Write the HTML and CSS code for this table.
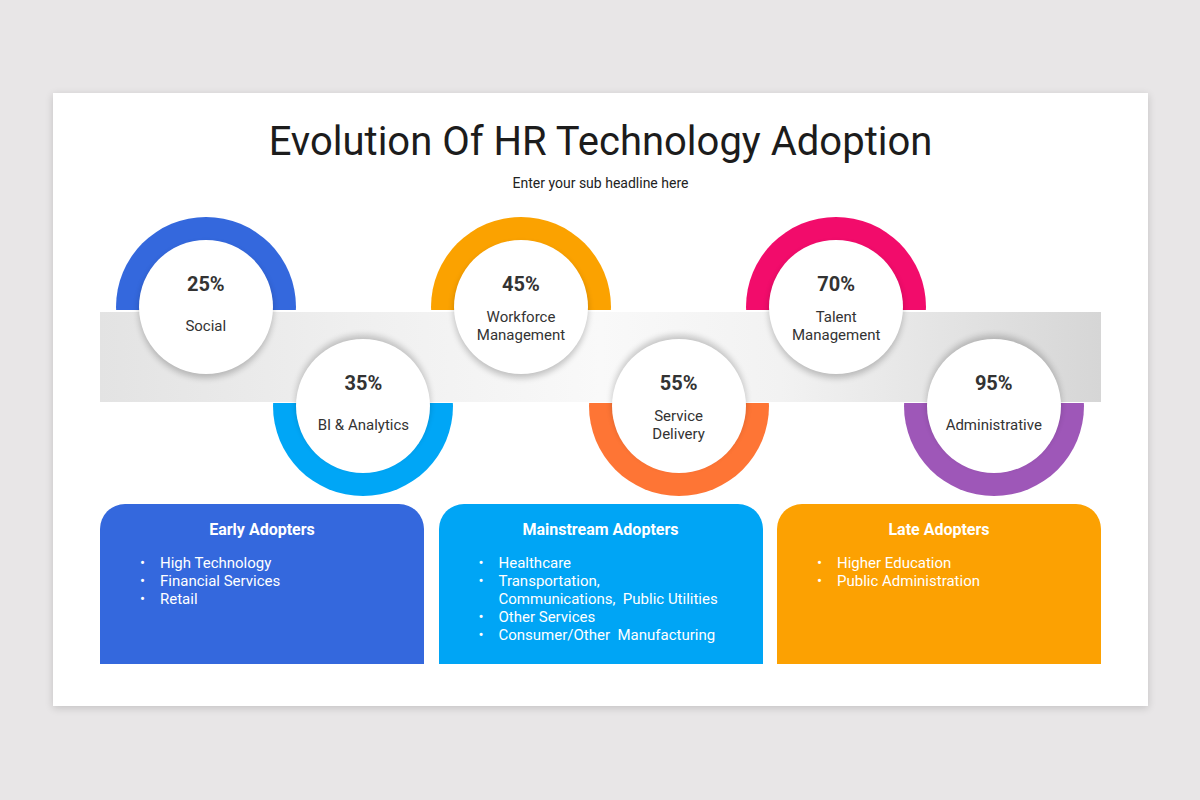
FILE: index.html
```html
<!DOCTYPE html>
<html lang="en">
<head>
<meta charset="utf-8">
<title>Evolution Of HR Technology Adoption</title>
<link rel="stylesheet" href="styles.css">
</head>
<body>
<main class="slide">
  <h1 class="title">Evolution Of HR Technology Adoption</h1>
  <p class="subtitle">Enter your sub headline here</p>

  <section class="diagram">
    <div class="band"></div>
    <div class="nodes">
      <div class="node node-top">
        <div class="ring ring-blue">
          <div class="disc disc-top">
            <span class="pct">25%</span>
            <span class="label">Social</span>
          </div>
        </div>
      </div>
      <div class="node node-bottom">
        <div class="ring ring-sky">
          <div class="disc disc-bottom">
            <span class="pct">35%</span>
            <span class="label">BI &amp; Analytics</span>
          </div>
        </div>
      </div>
      <div class="node node-top">
        <div class="ring ring-amber">
          <div class="disc disc-top">
            <span class="pct">45%</span>
            <span class="label">Workforce<br>Management</span>
          </div>
        </div>
      </div>
      <div class="node node-bottom">
        <div class="ring ring-orange">
          <div class="disc disc-bottom">
            <span class="pct">55%</span>
            <span class="label">Service<br>Delivery</span>
          </div>
        </div>
      </div>
      <div class="node node-top">
        <div class="ring ring-pink">
          <div class="disc disc-top">
            <span class="pct">70%</span>
            <span class="label">Talent<br>Management</span>
          </div>
        </div>
      </div>
      <div class="node node-bottom">
        <div class="ring ring-purple">
          <div class="disc disc-bottom">
            <span class="pct">95%</span>
            <span class="label">Administrative</span>
          </div>
        </div>
      </div>
    </div>
  </section>

  <section class="cards">
    <article class="card card-blue">
      <h2 class="card-title">Early Adopters</h2>
      <ul class="card-list">
        <li>High Technology</li>
        <li>Financial Services</li>
        <li>Retail</li>
      </ul>
    </article>
    <article class="card card-sky">
      <h2 class="card-title">Mainstream Adopters</h2>
      <ul class="card-list">
        <li>Healthcare</li>
        <li>Transportation,<br>Communications,&nbsp; Public Utilities</li>
        <li>Other Services</li>
        <li>Consumer/Other&nbsp; Manufacturing</li>
      </ul>
    </article>
    <article class="card card-amber">
      <h2 class="card-title">Late Adopters</h2>
      <ul class="card-list">
        <li>Higher Education</li>
        <li>Public Administration</li>
      </ul>
    </article>
  </section>
</main>
</body>
</html>
```

FILE: styles.css
```css
* { box-sizing: border-box; }

html, body {
  margin: 0;
  padding: 0;
}

body {
  background: #e8e6e7;
  font-family: Roboto, "Liberation Sans", Arial, sans-serif;
  width: 1200px;
  height: 800px;
  overflow: hidden;
}

.slide {
  margin: 93px 0 0 53px;
  width: 1095px;
  height: 613px;
  background: #ffffff;
  box-shadow: 0 2px 8px rgba(0, 0, 0, 0.16);
  padding: 21px 47px 0 47px;
  display: flex;
  flex-direction: column;
  align-items: stretch;
}

.title {
  margin: 0;
  text-align: center;
  font-size: 40px;
  line-height: 56px;
  font-weight: 400;
  color: #1c1c1c;
}

.subtitle {
  margin: 2px 0 0 0;
  text-align: center;
  font-size: 14px;
  line-height: 22px;
  color: #222222;
}

/* ---------- diagram ---------- */
.diagram {
  position: relative;
  margin-top: 23px;
  width: 1001px;
  height: 279px;
}

.band {
  position: absolute;
  left: 0;
  top: 95px;
  width: 1001px;
  height: 90px;
  z-index: 1;
  background: linear-gradient(to right, #e3e3e3 0%, #efefef 25%, #f9f9f9 50%, #f2f2f2 68%, #d6d6d6 100%);
  box-shadow: 0 -2px 0 #ffffff, 0 1px 0 #ffffff;
}

.nodes {
  display: flex;
  height: 279px;
  padding-left: 27px;
}

.node {
  width: 157.6px;
  flex: none;
  display: flex;
  justify-content: center;
}

.node-top { align-self: flex-start; }
.node-bottom { align-self: flex-end; }

.ring {
  width: 180px;
  height: 180px;
  flex: none;
  border-radius: 50%;
  display: flex;
  align-items: center;
  justify-content: center;
}

.ring-blue   { background: #3468dd; }
.ring-sky    { background: #00a6f6; }
.ring-amber  { background: #fba200; }
.ring-orange { background: #fe7535; }
.ring-pink   { background: #f20c6b; }
.ring-purple { background: #9e57b8; }

.disc {
  position: relative;
  z-index: 2;
  width: 134px;
  height: 134px;
  border-radius: 50%;
  background: #ffffff;
  display: flex;
  flex-direction: column;
  align-items: center;
  padding-top: 32px;
  color: #333333;
}

.disc-top { box-shadow: 0 4px 6px rgba(0, 0, 0, 0.22); }
.disc-bottom { box-shadow: 0 -4px 6px rgba(0, 0, 0, 0.2); }

.pct {
  display: block;
  height: 24px;
  line-height: 24px;
  font-size: 20px;
  font-weight: 700;
  color: #333333;
}

.label {
  margin-top: 12px;
  height: 36px;
  display: flex;
  align-items: center;
  justify-content: center;
  text-align: center;
  font-size: 15px;
  line-height: 18px;
  color: #333333;
}

/* ---------- cards ---------- */
.cards {
  margin-top: 8px;
  display: grid;
  grid-template-columns: 324px 324px 324px;
  column-gap: 14.5px;
  width: 1001px;
}

.card {
  height: 160px;
  border-radius: 25px 25px 0 0;
  padding-top: 16px;
  color: #ffffff;
}

.card-blue  { background: #3468dd; }
.card-sky   { background: #00a5f5; }
.card-amber { background: #fca102; }

.card-title {
  margin: 0;
  text-align: center;
  font-size: 16px;
  line-height: 20px;
  font-weight: 700;
}

.card-list {
  list-style: none;
  margin: 14px 0 0 0;
  padding: 0 0 0 40px;
}

.card-list li {
  display: flex;
  font-size: 15px;
  line-height: 18px;
}

.card-list li::before {
  content: "\2022";
  flex: none;
  width: 20px;
  font-size: 15px;
}
```
